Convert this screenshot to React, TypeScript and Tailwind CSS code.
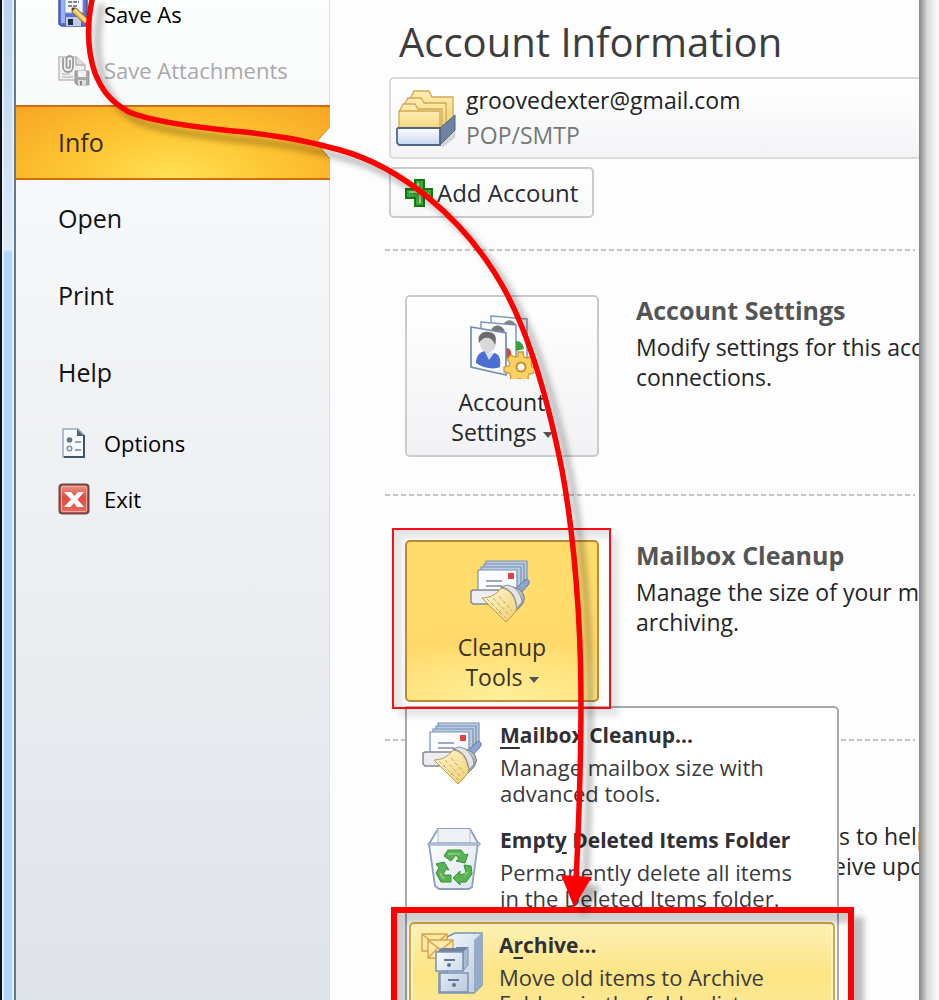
import React from 'react';

function SaveAsIcon() {
  return (
    <svg viewBox="0 0 32 32" className="size-8 shrink-0" aria-hidden="true">
      <path d="M3 0h25l1 2v25l-2 1H4l-3-2V2z" fill="#5b72cc" stroke="#4356a8" strokeWidth="1.5" />
      <path d="M3 2h4v23H3z" fill="#9fb0ee" />
      <path d="M7 0h18v15H7z" fill="#f6f8fd" stroke="#8b9ada" />
      <path d="M10 4h11M10 8h9" stroke="#59607c" strokeWidth="1.6" strokeDasharray="4 1" />
      <path d="M8 19h15v9H8z" fill="#c3cbe6" />
      <path d="M10 21h5v6h-5z" fill="#20284c" />
      <path d="M14 10l4 0 12 11v5l-4-1-12-11z" fill="#f2bd53" stroke="#8a6430" />
      <path d="M17 12l11 11" stroke="#ffe7a2" strokeWidth="1.5" />
      <path d="M14 10l3 .5-2.5 2.5z" fill="#333" />
    </svg>
  );
}

function SaveAttachmentsIcon() {
  return (
    <svg viewBox="0 0 32 32" className="size-8 shrink-0" fill="none" aria-hidden="true">
      <path d="M1 3h17l9 8v15H1z" fill="#f1f1f1" stroke="#bdbdbd" strokeWidth="1.5" />
      <path d="M18 3v8h9" fill="#dedede" stroke="#b5b5b5" strokeWidth="1.5" />
      <path d="M5 4v9a5 5 0 0 0 10 0V4a3.500 3.500 0 0 0-6.500 0v9a2 2 0 0 0 3.500 0V6" stroke="#9c9c9c" strokeWidth="1.800" />
      <path d="M17 17h14v14H19l-2-2z" fill="#a8a8a8" stroke="#999" />
      <path d="M20 17h8v6h-8z" fill="#f1f1f1" />
      <path d="M20 26h8v5h-8z" fill="#dcdcdc" />
      <path d="M22 27h2v4h-2z" fill="#888" />
      <path d="M4 20h8M4 23h11" stroke="#c4c4c4" strokeWidth="1.500" />
    </svg>
  );
}

function OptionsIcon() {
  return (
    <svg viewBox="0 0 32 32" className="size-8 shrink-0" fill="none" aria-hidden="true">
      <path d="M5 2h15l6 6v22H5z" fill="#f7fafd" stroke="#9aaaba" strokeWidth="1.500" />
      <path d="M26 8v22H6" stroke="#3d5566" strokeWidth="2" />
      <path d="M19 2l7 7h-7z" fill="#4d6576" />
      <circle cx="11.500" cy="13" r="2.800" fill="#65778c" />
      <circle cx="11.500" cy="21.500" r="2.300" stroke="#7c8fa4" strokeWidth="1.400" />
      <path d="M17 15h6M17 23h6" stroke="#73879b" strokeWidth="1.600" />
    </svg>
  );
}

function ExitIcon() {
  return (
    <svg viewBox="0 0 32 32" className="size-8 shrink-0" aria-hidden="true">
      <defs>
        <linearGradient id="exitFill" x1="0" y1="0" x2="0" y2="1">
          <stop offset="0" stopColor="#ee9a90" />
          <stop offset=".45" stopColor="#e04a40" />
          <stop offset="1" stopColor="#ea6c5e" />
        </linearGradient>
      </defs>
      <rect x="1.500" y="1.500" width="29" height="29" rx="3" fill="url(#exitFill)" stroke="#6f4745" strokeWidth="2" />
      <rect x="3.500" y="3.500" width="25" height="25" rx="1.500" fill="none" stroke="#f4a69d" />
      <path d="M6 9h7l3.500 4L20 9h6l-6.500 7.500L26 24h-7l-3-4-3.500 4H6l7-7.500z" fill="#fff" />
    </svg>
  );
}

function FoldersIcon() {
  return (
    <svg viewBox="0 0 62 60" className="h-[60px] w-[62px] shrink-0" aria-hidden="true">
      <defs>
        <linearGradient id="folder" x1="0" y1="0" x2="0" y2="1">
          <stop offset="0" stopColor="#ffedb0" />
          <stop offset="1" stopColor="#f2d070" />
        </linearGradient>
        <linearGradient id="tray" x1="0" y1="0" x2="0" y2="1">
          <stop offset="0" stopColor="#fdfeff" />
          <stop offset="1" stopColor="#c8d8ee" />
        </linearGradient>
      </defs>
      <path d="M44 57l16-16-1 9-12 9z" fill="#d5d5d8" />
      <g fill="url(#folder)" stroke="#d0a95a" strokeWidth="1.300">
        <path d="M15 9l3-6h15l3 6h21v30H15z" />
        <path d="M9 15l3-5h13l3 5h22v29H9z" />
        <path d="M4 22l3-6h12l3 5h24v24H4z" />
        <path d="M3 23h41v23H3z" />
      </g>
      <path d="M44 40l15-13v15L44 57z" fill="#6e83a2" stroke="#4f6485" />
      <path d="M2 40h42v17H3l-2-2V41z" fill="url(#tray)" stroke="#506788" strokeWidth="1.800" />
    </svg>
  );
}

function PlusIcon() {
  return (
    <svg viewBox="0 0 28 28" className="size-7 shrink-0" aria-hidden="true">
      <path d="M10 1h9v9h8v9h-8v8h-9v-8H1v-9h9z" fill="#3fa63b" stroke="#107c10" strokeWidth="2" />
      <path d="M13 4v9H4M15 15h9M15 15v9" stroke="#9bd991" strokeWidth="2" fill="none" />
    </svg>
  );
}

function PeopleIcon() {
  return (
    <svg viewBox="0 0 64 64" className="size-16" aria-hidden="true">
      <g fill="#fbfdff" stroke="#7e9abd" strokeWidth="1.500">
        <path d="M21 1l36 3v47l-36-7z" />
        <path d="M11 7l35 3v47l-35-8z" />
      </g>
      <path d="M34 9c2-5 9-5 12 1z" fill="#858585" />
      <path d="M21 16c2-8 12-7 14 1z" fill="#777" />
      <path d="M46 26c5 0 7 3 8 8l-8 2z" fill="#38a33a" />
      <path d="M36 33c4 0 6 3 5 8l-5 3z" fill="#d44731" />
      <path d="M1 12l35 6v42L1 52z" fill="#f9fbff" stroke="#6f8db3" strokeWidth="1.700" />
      <path d="M6 48c0-8 5-12 10-12l5 3 4-1c5 2 6 7 5 14-7 3-17 1-24-4z" fill="#4d6fd2" />
      <path d="M15 37l4 8 5-7z" fill="#d8e5ff" />
      <ellipse cx="18" cy="28" rx="8" ry="9.500" fill="#d9d9d9" />
      <path d="M9 28c-2-9 4-12 10-11 7 1 8 6 6 13-2-5-4-7-7-7-4-1-6 1-9 5z" fill="#6b6b6b" />
      <path d="M48 37h5l1 5 3 1 4-2 3 4-3 4 1 3 4 1-2 5-5 1-1 3 1 4-5 2-3-4h-3l-3 4-5-2 1-5-2-3-5-1v-5l5-1 1-3-3-4 4-4 4 2 3-1z" fill="#fad162" stroke="#d0982f" strokeWidth="1.300" />
      <circle cx="51" cy="52" r="4.500" fill="#fff" stroke="#c48d2c" strokeWidth="2" />
    </svg>
  );
}

function CleanupIcon() {
  return (
    <svg viewBox="0 0 64 64" className="size-16 shrink-0" aria-hidden="true">
      <defs>
        <linearGradient id="bristle" x1="0" y1="0" x2="1" y2="1">
          <stop offset="0" stopColor="#fffbdc" />
          <stop offset="1" stopColor="#f0cd6c" />
        </linearGradient>
        <linearGradient id="metal" x1="0" y1="0" x2="1" y2="1">
          <stop offset="0" stopColor="#fff" />
          <stop offset="1" stopColor="#8c9299" />
        </linearGradient>
      </defs>
      <g stroke="#7b91b0" strokeWidth="1.200" fill="#b8cbe1">
        <path d="M16 1h41v25H16z" />
        <path d="M14 4h40v24H14z" />
        <path d="M11 7h40v24H11z" />
        <path d="M8 10h39v24H8z" fill="#fafcff" />
      </g>
      <path d="M38 13h6v6h-6z" fill="#e44141" />
      <path d="M16 21h16M16 26h16" stroke="#7c8ea8" strokeWidth="1.600" />
      <path d="M3 30h26v14H3l-2-2V31z" fill="#eceef1" stroke="#858a91" strokeWidth="1.500" />
      <path d="M46 28l9-8c3-2 6 2 3 5l-8 9z" fill="#8aa6d1" stroke="#5e7ba5" />
      <path d="M31 27c8-2 15 0 20 4 5 5 4 11-1 16l-4 4z" fill="url(#metal)" stroke="#747a82" />
      <path d="M12 38c7 0 14-3 19-10 8 1 14 7 16 21-3 5-7 9-11 13z" fill="url(#bristle)" stroke="#b5934d" />
      <path d="M17 39l19 19M23 38l16 17M29 36l13 15M21 44l2-1M29 53l2-3" stroke="#cfa957" strokeDasharray="4 2" />
      <path d="M31 27c9 1 15 9 16 21l5-6c-1-9-7-16-15-17z" fill="#e2e4e7" stroke="#8d9299" />
    </svg>
  );
}

function RecycleIcon() {
  return (
    <svg viewBox="0 0 56 64" className="h-16 w-14 shrink-0" aria-hidden="true">
      <defs>
        <linearGradient id="bin" x1="0" y1="0" x2="1" y2="1">
          <stop offset="0" stopColor="#fff" />
          <stop offset="1" stopColor="#dde6f0" />
        </linearGradient>
      </defs>
      <path d="M12 2h32l8 14-6 44-3 2H13l-4-3L3 17z" fill="url(#bin)" stroke="#8fa1ba" strokeWidth="1.800" />
      <path d="M12 2v14h32V2" fill="#edf1f5" stroke="#b7c0cc" />
      <path d="M2 16h52v2H2z" fill="#d6e2f0" stroke="#8296b3" />
      <g fill="#58b350" stroke="#36903a" strokeWidth="1">
        <path d="M18 29l4-6h13l4 5 3-1-3 9-9-2 3-2-3-4-5 6z" />
        <path d="M10 37l8-2 5 8-3-1-3 6h8v7H15l-5-9 3-5z" />
        <path d="M38 38l7 1 1 8-6 8h-6v3l-7-7 7-7v4l6-2z" />
      </g>
      <path d="M22 27h12M14 46l4 6M38 48l4-3" stroke="#91d084" strokeWidth="1.500" />
    </svg>
  );
}

function ArchiveIcon() {
  return (
    <svg viewBox="0 0 64 64" className="size-16 shrink-0" aria-hidden="true">
      <defs>
        <linearGradient id="cabinet" x1="0" y1="0" x2="1" y2="1">
          <stop offset="0" stopColor="#f8fbff" />
          <stop offset="1" stopColor="#b9c8dc" />
        </linearGradient>
      </defs>
      <path d="M26 5l8-4h27v52l-8 8H18V41h8z" fill="url(#cabinet)" stroke="#7a93b4" strokeWidth="1.500" />
      <path d="M53 8l8-7v52l-8 8z" fill="#96abc9" />
      <g fill="#ffe9a8" stroke="#d5a347" strokeWidth="1.400">
        <path d="M1 2h25v17H1z" />
        <path d="M2 3l12 9L25 3" fill="none" />
        <path d="M7 8h25v18H7z" />
        <path d="M8 9l12 9L31 9M8 25l9-9M31 25l-9-9" fill="none" />
      </g>
      <path d="M35 15h11v18l-5 5z" fill="#71859f" />
      <path d="M15 21l5-5h27l-5 5z" fill="#71839c" />
      <path d="M42 20l5-5v18l-5 6z" fill="#a9bbd3" stroke="#7a93b4" />
      <path d="M15 20h27v19H15zM19 41h28v19H19z" fill="url(#cabinet)" stroke="#7a93b4" strokeWidth="1.500" />
      <path d="M23 28h11M27 48h11" stroke="#63789a" strokeWidth="1.800" />
      <circle cx="28" cy="33" r="2" fill="#607494" />
      <circle cx="33" cy="53" r="2" fill="#607494" />
    </svg>
  );
}

function SubItem({ icon, label, disabled = false }: { icon: React.ReactNode; label: string; disabled?: boolean }) {
  return (
    <button
      disabled={disabled}
      className="flex h-14 w-full items-center gap-3.5 pl-[42px] text-left text-[22px] text-black disabled:text-[#a9a9ac]"
    >
      {icon}
      <span className="whitespace-nowrap">{label}</span>
    </button>
  );
}

function NavItem({ label }: { label: string }) {
  return (
    <button className="flex h-[77px] w-full items-center pl-[42px] text-left text-[25px] text-[#111]">{label}</button>
  );
}

function Sidebar() {
  return (
    <nav className="w-[314px] shrink-0 border-r border-[#dcdee1] bg-linear-to-b from-[#fcfdfd] via-[#f0f1f4] via-45% to-[#dfe4e9]">
      <div className="-mt-3.5">
        <SubItem icon={<SaveAsIcon />} label="Save As" />
      </div>
      <SubItem icon={<SaveAttachmentsIcon />} label="Save Attachments" disabled />
      <button
        aria-current="page"
        className="relative mt-[7px] flex h-[75px] w-[314px] items-center border-y-2 border-[#cf6b0a] bg-[radial-gradient(ellipse_at_50%_100%,#ffe156_0%,#fdc733_45%,#f8a623_100%)] pl-[42px] text-left text-[25px] text-[#3a2a1c]"
      >
        Info
        <svg viewBox="0 0 15 32" className="absolute top-5 right-0 h-8 w-[15px]" aria-hidden="true">
          <path d="M15 0L1 15l14 17z" fill="#fefefe" />
          <path d="M15 0L1 15l14 17" fill="none" stroke="#d78a20" />
        </svg>
      </button>
      <NavItem label="Open" />
      <NavItem label="Print" />
      <NavItem label="Help" />
      <div className="pt-1">
        <SubItem icon={<OptionsIcon />} label="Options" />
        <SubItem icon={<ExitIcon />} label="Exit" />
      </div>
    </nav>
  );
}

function Caret() {
  return <span className="ml-1.5 inline-block border-x-[5px] border-t-[6px] border-x-transparent border-t-[#555] align-middle" />;
}

const toolButton =
  'flex h-[162px] w-[194px] flex-col items-center gap-2 rounded-[5px] border-2 pt-[18px] text-[23px] leading-[30px]';

function SectionText({ title, lines }: { title: string; lines: string[] }) {
  return (
    <div className="min-w-0 flex-1 whitespace-nowrap text-[23px] leading-[30px] text-[#262626]">
      <h2 className="mb-[7px] text-[25px] font-bold text-[#555]">{title}</h2>
      {lines.map((line) => (
        <p key={line}>{line}</p>
      ))}
    </div>
  );
}

function MenuItem({ icon, title, lines, active = false }: { icon: React.ReactNode; title: React.ReactNode; lines: string[]; active?: boolean }) {
  return (
    <button
      role="menuitem"
      className={
        active
          ? 'mx-0.5 mt-1 flex h-[105px] gap-3.5 rounded-t-[5px] border-2 border-[#d5aa3f] bg-linear-to-b from-[#fdf0b4] via-[#fde584] to-[#fdea9d] pt-2 pl-2.5 text-left shadow-[inset_0_0_0_2px_#fff5cb]'
          : 'flex h-[105px] gap-3.5 pt-3.5 pl-[15px] text-left'
      }
    >
      <span className="flex w-16 shrink-0 justify-center">{icon}</span>
      <span className="block whitespace-nowrap text-[22px] leading-[26px] text-[#3b3b3f]">
        <span className="mb-1.5 block text-[21px] font-bold text-[#303035]">{title}</span>
        {lines.map((line) => (
          <span key={line} className="block">
            {line}
          </span>
        ))}
      </span>
    </button>
  );
}

function CleanupMenu() {
  return (
    <div
      role="menu"
      className="absolute top-[166px] left-0 z-10 flex w-[434px] flex-col rounded-tr-[5px] border-2 border-[#a7abb0] bg-white"
    >
      <MenuItem
        icon={<CleanupIcon />}
        title={
          <>
            <u className="underline-offset-4">M</u>ailbox Cleanup...
          </>
        }
        lines={['Manage mailbox size with', 'advanced tools.']}
      />
      <MenuItem
        icon={<RecycleIcon />}
        title={
          <>
            Empt<u className="underline-offset-4">y</u> Deleted Items Folder
          </>
        }
        lines={['Permanently delete all items', 'in the Deleted Items folder.']}
      />
      <MenuItem
        active
        icon={<ArchiveIcon />}
        title={
          <>
            A<u className="underline-offset-4">r</u>chive...
          </>
        }
        lines={['Move old items to Archive', 'Folders in the folder list.']}
      />
    </div>
  );
}

function Rule() {
  return (
    <div className="mr-1 h-0.5 bg-[repeating-linear-gradient(90deg,#c4c4c4_0_5px,transparent_5px_8px)]" />
  );
}

function Content() {
  return (
    <main className="min-w-0 flex-1 overflow-hidden bg-[#fdfdfd] pl-[55px]">
      <h1 className="flex h-[77px] items-center pt-1.5 pl-3.5 text-[40px] whitespace-nowrap text-[#3d3d3f]">Account Information</h1>
      <div className="ml-1 flex h-[82px] items-center gap-2 rounded-l-[5px] border-2 border-r-0 border-[#d9dbdd] bg-linear-to-b from-white to-[#f3f4f6] pl-[5px]">
        <FoldersIcon />
        <div className="text-[23px] leading-[35px] whitespace-nowrap text-[#222]">
          <div>groovedexter@gmail.com</div>
          <div className="text-[#777]">POP/SMTP</div>
        </div>
      </div>
      <button className="mt-2 ml-1 flex h-[51px] w-[205px] items-center gap-1 rounded-[5px] border-2 border-[#c9cbce] bg-linear-to-b from-white to-[#f7f8f9] pl-3.5 text-[24px] whitespace-nowrap text-[#2b2b33]">
        <PlusIcon />
        Add Account
      </button>
      <div className="mt-[31px] h-[245px]">
        <Rule />
        <section className="flex gap-[37px] pt-11 pl-5">
          <button className={`${toolButton} border-[#c9cbce] bg-linear-to-b from-white to-[#f1f2f4] text-[#262626]`}>
            <PeopleIcon />
            <span>
              Account
              <br />
              Settings
              <Caret />
            </span>
          </button>
          <SectionText title="Account Settings" lines={['Modify settings for this account and', 'connections.']} />
        </section>
      </div>
      <div className="h-[245px]">
        <Rule />
        <section className="flex gap-[37px] pt-11 pl-5">
          <div className="relative">
            <button
              aria-expanded="true"
              className={`${toolButton} border-[#bd8a35] bg-[radial-gradient(ellipse_120%_50%_at_50%_100%,#fff09c_0%,#ffe27c_50%,#ffd869_80%,#ffdc6c_100%)] text-[#3a3224]`}
            >
              <CleanupIcon />
              <span>
                Cleanup
                <br />
                Tools
                <Caret />
              </span>
            </button>
            <CleanupMenu />
          </div>
          <SectionText title="Mailbox Cleanup" lines={['Manage the size of your mailbox', 'archiving.']} />
        </section>
      </div>
      <Rule />
      <p className="pt-[80px] pl-[448px] indent-1.5 text-[23px] leading-[30px] whitespace-nowrap text-[#262626]">
        s to help
      </p>
      <p className="pl-[448px] text-[23px] leading-[30px] whitespace-nowrap text-[#262626]">eive updates</p>
    </main>
  );
}

function Callouts() {
  return (
    <div className="pointer-events-none absolute inset-0 z-20 overflow-hidden">
      <div className="absolute top-[528px] left-[392px] h-[181px] w-[219px] border-2 border-[#f80d18] shadow-[8px_8px_6px_#00000018,inset_8px_8px_6px_#00000018]" />
      <div className="absolute top-[907px] left-[391px] h-[140px] w-[463px] border-6 border-[#fe0000] shadow-[10px_10px_6px_#00000040,inset_10px_10px_5px_#00000030]" />
      <svg viewBox="0 0 939 1000" className="absolute top-0 left-0 h-[1000px] w-[939px]" aria-hidden="true">
        <defs>
          <filter id="arrowShadow" x="-10%" y="-10%" width="130%" height="120%">
            <feDropShadow dx="9" dy="9" stdDeviation="3" floodColor="#000" floodOpacity=".3" />
          </filter>
        </defs>
        <g filter="url(#arrowShadow)">
          <path
            d="M93-5C87 22 87 50 95 73C101 88 109 101 129 112C150 121 194 127 233 131C270 134 309 141 340 150C398 166 462 215 502 285C531 336 550 410 562 470C574 535 581 620 581 700C581 760 579 820 576 882"
            fill="none"
            stroke="#fe0000"
            strokeWidth="5.500"
          />
          <path d="M561 875l31 2-18 30z" fill="#fe0000" />
        </g>
      </svg>
    </div>
  );
}

export default function App() {
  return (
    <div className="relative flex h-screen overflow-hidden bg-white font-['Open_Sans','Noto_Sans',sans-serif]">
      <div className="flex shrink-0">
        <div className="w-0.5 bg-[#10131c]" />
        <div className="w-3 border-x-2 border-[#e6f1fa] bg-[linear-gradient(180deg,#b8d2ef_0,#dceaf8_250px,#b3d5fa_252px,#b3d5fa_100%)]" />
        <div className="w-0.5 bg-[#66788b]" />
      </div>
      <Sidebar />
      <Content />
      <div className="w-5 shrink-0 bg-linear-to-r from-[#858585] via-[#dadada] via-40% to-white" />
      <Callouts />
    </div>
  );
}
